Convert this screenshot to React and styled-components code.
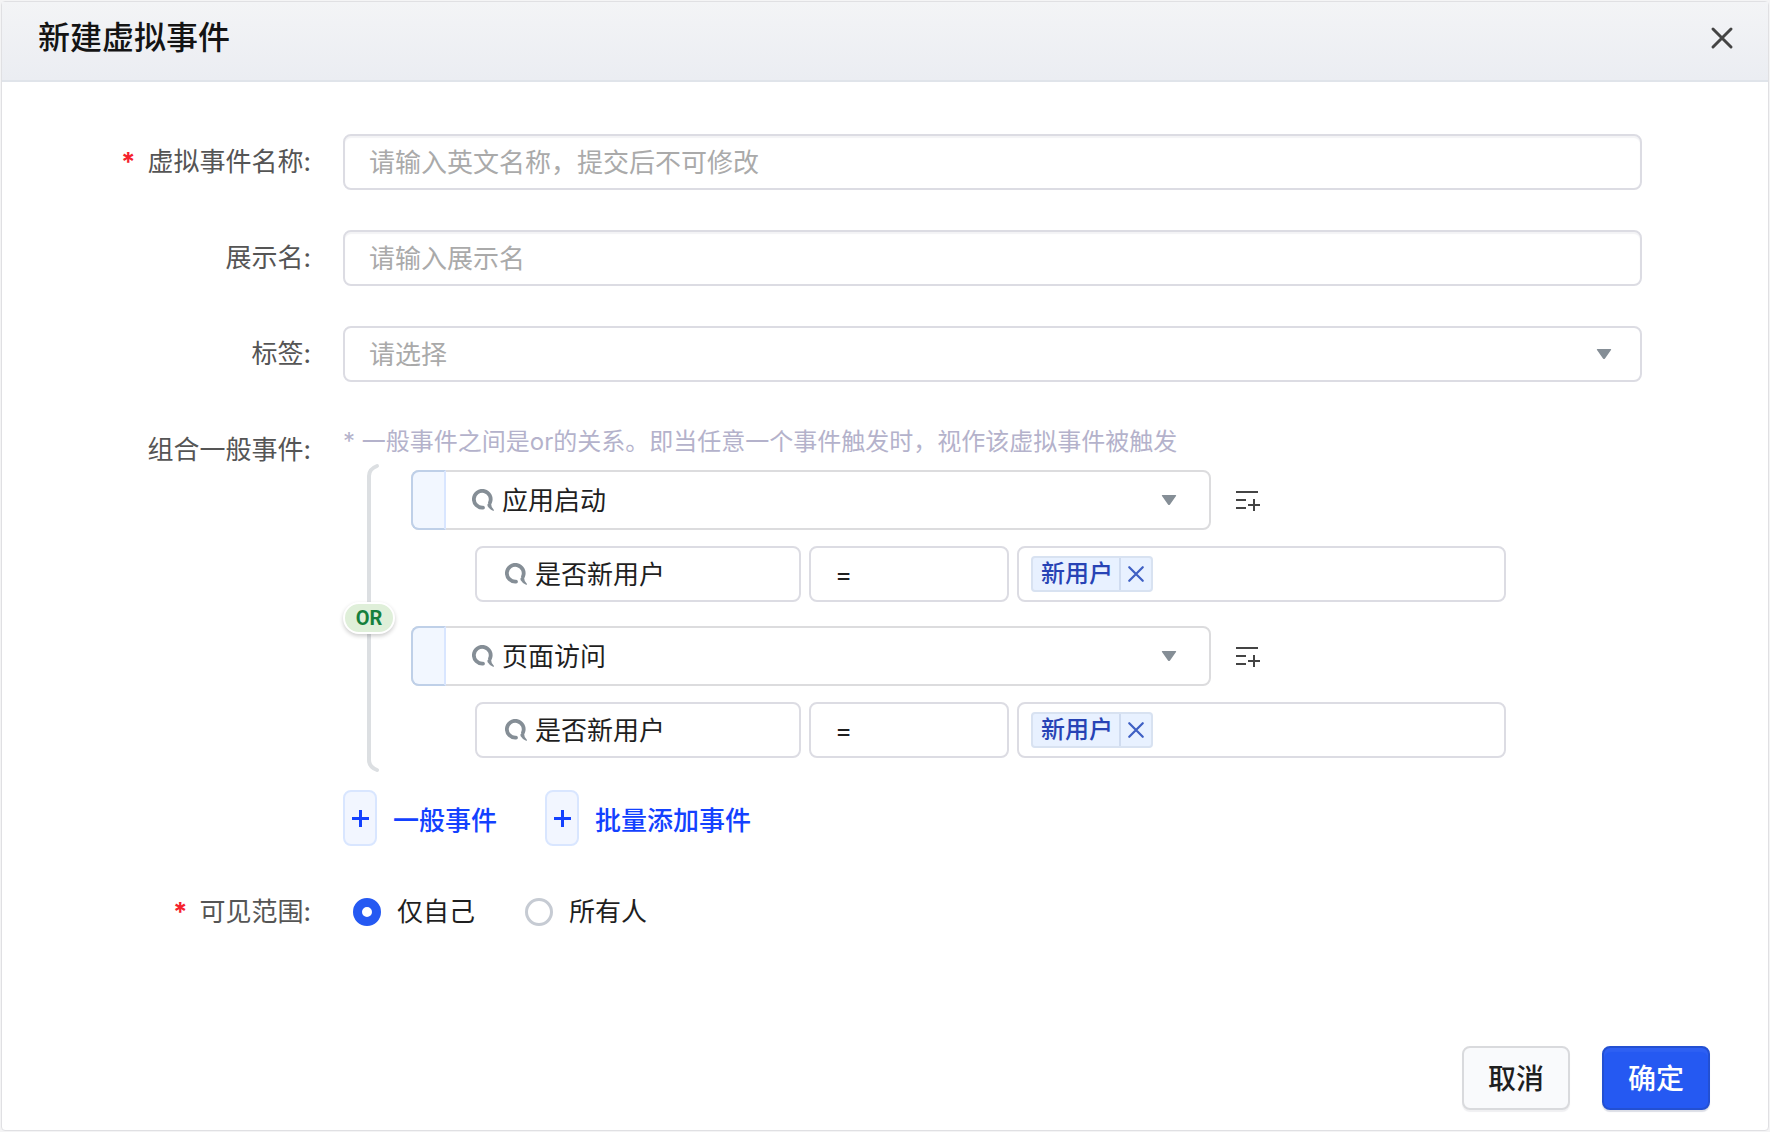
import React, { useState } from 'react'
import styled, { createGlobalStyle, css } from 'styled-components'

const GlobalStyle = createGlobalStyle`
  * {
    box-sizing: border-box;
  }

  body {
    margin: 0;
    background: #f4f4f5;
  }

  body, button, input, select {
    font-family: Inter, "Noto Sans CJK SC", sans-serif;
    font-size: 26px;
    color: #1f1f1f;
  }
`

const Dialog = styled.form`
  display: flex;
  flex-direction: column;
  min-height: calc(100vh - 2px);
  margin: 1px;
  border: 1px solid #e0e0e3;
  border-radius: 4px;
  background: #fff;
`

const Header = styled.header`
  display: flex;
  align-items: center;
  justify-content: space-between;
  height: 80px;
  padding: 0 34px 6px 36px;
  border-bottom: 2px solid #e0e4ea;
  background: linear-gradient(#f3f4f6, #ebedf2);
`

const Title = styled.h1`
  margin: 0;
  font-size: 32px;
  font-weight: 500;
  line-height: 48px;
  color: #141414;
`

const IconButton = styled.button`
  display: flex;
  align-items: center;
  justify-content: center;
  padding: 0;
  border: 0;
  background: none;
  cursor: pointer;
`

const Body = styled.main`
  display: flex;
  flex: 1;
  flex-direction: column;
  gap: 40px;
  padding: 52px 126px 0 0;
`

const Field = styled.div`
  display: grid;
  grid-template-columns: 309px minmax(0, 1fr);
  column-gap: 32px;
  align-items: start;
  line-height: ${props => props.$line || 56}px;
`

const FieldLabel = styled.label`
  text-align: right;
  color: #555;
`

const Required = styled.span`
  margin-right: 12px;
  font-weight: 700;
  color: #f5222d;
`

const controlBorder = css`
  border: 2px solid #dcdce3;
  border-radius: 8px;
  background: #fff;
`

const TextInput = styled.input`
  ${controlBorder}
  width: 100%;
  height: 56px;
  padding: 0 24px;
  box-shadow: inset 0 2px 1px #f3f3f5;
  outline: none;

  &::placeholder {
    color: #aaa;
    opacity: 1;
  }
`

const SelectBox = styled.div`
  ${controlBorder}
  display: grid;
  grid-template-columns: minmax(0, 1fr);
  align-items: center;
  flex: 0 1 ${props => props.$width || 'auto'};
  height: 56px;

  > * {
    grid-area: 1 / 1;
  }

  > svg {
    pointer-events: none;
  }
`

const EventBox = styled(SelectBox)`
  height: 60px;
  border-color: #dcdcde;
`

const Select = styled.select`
  width: 100%;
  height: 100%;
  padding: 0 64px 0 ${props => props.$indent || 24}px;
  border: 0;
  background: none;
  color: ${props => props.$muted ? '#aaa' : '#1f1f1f'};
  appearance: none;
  outline: none;
`

const Handle = styled.span`
  width: 35px;
  height: 60px;
  margin: -2px;
  border: 2px solid #bfd0e8;
  border-right-color: #d9e6ff;
  border-radius: 8px 0 0 8px;
  background: #f2f7ff;
`

const CaretIcon = styled.svg`
  justify-self: end;
  margin-right: ${props => props.$inset || 28}px;
`

const LeadIcon = styled.svg`
  margin-left: ${props => props.$offset}px;
`

const Hint = styled.p`
  margin: 0;
  font-size: 24px;
  line-height: 40px;
  color: #b4b2cb;
`

const Group = styled.div`
  display: flex;
  gap: 16px;
  margin: 2px 0 18px;
`

const Relation = styled.div`
  display: grid;
  flex: none;
  justify-items: center;
  align-items: center;
  width: 52px;

  > * {
    grid-area: 1 / 1;
  }
`

const Bracket = styled.div`
  display: flex;
  flex-direction: column;
  align-self: stretch;
  width: 4px;
`

const BracketEnd = styled.svg`
  flex: none;
  overflow: visible;
`

const BracketLine = styled.div`
  flex: 1;
  background: #dcdfe2;
`

const Badge = styled.span`
  z-index: 1;
  width: 52px;
  border: 2px solid #fff;
  border-radius: 16px;
  background: #dfefd9;
  box-shadow: 0 2px 4px rgba(0, 0, 0, 0.2);
  font-family: Roboto, sans-serif;
  font-size: 20px;
  font-weight: 700;
  line-height: 28px;
  text-align: center;
  color: #15803d;
`

const EventList = styled.div`
  display: flex;
  flex: 1;
  flex-direction: column;
  gap: 24px;
  min-width: 0;
  padding: 6px 0 14px;
`

const EventItem = styled.div`
  display: flex;
  flex-direction: column;
  gap: 16px;
`

const EventRow = styled.div`
  display: flex;
  align-items: center;
  gap: 24px;
`

const FilterRow = styled.div`
  display: flex;
  gap: 8px;
  padding-left: 64px;
`

const TagBox = styled.div`
  ${controlBorder}
  display: flex;
  align-items: center;
  flex: 0 1 489px;
  min-width: 0;
  height: 56px;
  padding: 0 12px;
`

const TagInput = styled.input`
  flex: 1;
  min-width: 0;
  border: 0;
  background: none;
  outline: none;
`

const Tag = styled.span`
  display: flex;
  flex: none;
  height: 36px;
  border: 2px solid #d8e2f1;
  border-radius: 4px;
  background: #e8f1ff;
  font-size: 24px;
  font-weight: 500;
  line-height: 32px;
  color: #2743b5;
`

const TagText = styled.span`
  padding: 0 6px 0 8px;
`

const TagClose = styled(IconButton)`
  width: 32px;
  border-left: 2px solid #d0dcf0;
`

const AddRow = styled.div`
  display: flex;
  gap: 48px;
`

const AddButton = styled.button`
  display: flex;
  align-items: center;
  gap: 16px;
  padding: 0;
  border: 0;
  background: none;
  font-weight: 500;
  color: #1341ff;
  cursor: pointer;
`

const PlusBox = styled.span`
  display: flex;
  align-items: center;
  justify-content: center;
  width: 34px;
  height: 56px;
  border: 2px solid #d9e6ff;
  border-radius: 8px;
  background: #f2f6ff;
`

const RadioRow = styled.div`
  display: flex;
  gap: 50px;
  padding-left: 10px;
`

const RadioLabel = styled.label`
  display: flex;
  align-items: center;
  gap: 16px;
`

const Radio = styled.input`
  width: 28px;
  height: 28px;
  margin: 0;
  border: 3px solid #c6cbd3;
  border-radius: 50%;
  background: #fff;
  appearance: none;

  &:checked {
    border: 9px solid #2559f2;
  }
`

const Footer = styled.footer`
  display: flex;
  justify-content: flex-end;
  gap: 32px;
  padding: 0 58px 20px;
`

const FooterButton = styled.button`
  width: 108px;
  height: 64px;
  padding: 0 0 2px;
  border: 2px solid ${props => props.$primary ? '#2350d2' : '#d9dadd'};
  border-radius: 8px;
  background: ${props => props.$primary ? '#2559f2' : '#f9fafc'};
  box-shadow: 0 2px 1px ${props => props.$primary ? '#dcdee6, inset 0 4px 1px #2e60f3' : '#f0f0f2'};
  font-size: 28px;
  font-weight: 500;
  color: ${props => props.$primary ? '#fff' : '#1f1f1f'};
  cursor: pointer;
`

const Cross = ({ size, color }) =>
  <svg width={size} height={size} viewBox="0 0 24 24" fill="none" stroke={color} strokeWidth="3" strokeLinecap="round">
    <path d="M3 3 21 21M21 3 3 21" />
  </svg>

const Caret = ({ inset }) =>
  <CaretIcon $inset={inset} width="16" height="12" viewBox="0 0 16 12" fill="#858e96">
    <path d="M1.5 1h13q1.2 0 .5 1l-6 8.600q-1 1-2 0L1 2q-.7-1 .5-1Z" />
  </CaretIcon>

const EventIcon = ({ offset }) =>
  <LeadIcon $offset={offset} width="22" height="22" viewBox="0 0 22 22" fill="none">
    <path d="M11 18.600A8.400 8.400 0 1 1 18 13.500" stroke="#858e96" strokeWidth="3.800" strokeLinecap="round" />
    <path d="M15.500 15 18.800 13.500Q19 18 22 21l-.5 1Q17.500 20.500 15.500 17Z" fill="#858e96" />
  </LeadIcon>

const Plus = () =>
  <svg width="18" height="18" viewBox="0 0 18 18" stroke="#1341ff" strokeWidth="3">
    <path d="M9.500 1V18M1 9.500H18" />
  </svg>

const AddFilterIcon = () =>
  <svg width="26" height="22" viewBox="0 0 26 22" stroke="#444" strokeWidth="2">
    <path d="M1 3H23M1 11H11M1 19H11M13 16H25M19 10V22" />
  </svg>

const events = ['应用启动', '页面访问']

const EventEditor = ({ name }) =>
  <EventItem>
    <EventRow>
      <EventBox $width="800px">
        <Handle />
        <EventIcon offset={59} />
        <Select $indent={89} defaultValue={name} aria-label="一般事件">
          {events.map(event => <option key={event}>{event}</option>)}
        </Select>
        <Caret inset={32} />
      </EventBox>
      <IconButton type="button" aria-label="添加筛选">
        <AddFilterIcon />
      </IconButton>
    </EventRow>
    <FilterRow>
      <SelectBox $width="326px">
        <EventIcon offset={28} />
        <Select $indent={58} aria-label="属性">
          <option>是否新用户</option>
        </Select>
      </SelectBox>
      <SelectBox $width="200px">
        <Select aria-label="运算符">
          <option>=</option>
        </Select>
      </SelectBox>
      <TagBox>
        <Tag>
          <TagText>新用户</TagText>
          <TagClose type="button" aria-label="移除">
            <Cross size={18} color="#3f60c4" />
          </TagClose>
        </Tag>
        <TagInput aria-label="属性值" />
      </TagBox>
    </FilterRow>
  </EventItem>

const App = () => {
  const [scope, setScope] = useState('self')

  return (
    <>
      <GlobalStyle />
      <Dialog onSubmit={e => e.preventDefault()}>
        <Header>
          <Title>新建虚拟事件</Title>
          <IconButton type="button" aria-label="关闭">
            <Cross size={24} color="#444" />
          </IconButton>
        </Header>
        <Body>
          <Field>
            <FieldLabel htmlFor="event-name"><Required>*</Required>虚拟事件名称:</FieldLabel>
            <TextInput id="event-name" placeholder="请输入英文名称，提交后不可修改" />
          </Field>
          <Field>
            <FieldLabel htmlFor="display-name">展示名:</FieldLabel>
            <TextInput id="display-name" placeholder="请输入展示名" />
          </Field>
          <Field>
            <FieldLabel htmlFor="tags">标签:</FieldLabel>
            <SelectBox>
              <Select id="tags" $muted>
                <option>请选择</option>
              </Select>
              <Caret />
            </SelectBox>
          </Field>
          <Field>
            <FieldLabel as="span">组合一般事件:</FieldLabel>
            <div>
              <Hint>* 一般事件之间是or的关系。即当任意一个事件触发时，视作该虚拟事件被触发</Hint>
              <Group>
                <Relation>
                  <Bracket>
                    <BracketEnd width="12" height="14" viewBox="0 0 12 14" fill="none">
                      <path d="M2 14V12Q2 5 10 2" stroke="#dcdfe2" strokeWidth="4" strokeLinecap="round" />
                    </BracketEnd>
                    <BracketLine />
                    <BracketEnd width="12" height="14" viewBox="0 0 12 14" fill="none">
                      <path d="M2 0V2Q2 9 10 12" stroke="#dcdfe2" strokeWidth="4" strokeLinecap="round" />
                    </BracketEnd>
                  </Bracket>
                  <Badge>OR</Badge>
                </Relation>
                <EventList>
                  {events.map(event => <EventEditor key={event} name={event} />)}
                </EventList>
              </Group>
              <AddRow>
                <AddButton type="button"><PlusBox><Plus /></PlusBox>一般事件</AddButton>
                <AddButton type="button"><PlusBox><Plus /></PlusBox>批量添加事件</AddButton>
              </AddRow>
            </div>
          </Field>
          <Field $line={52} role="radiogroup" aria-labelledby="scope-label">
            <FieldLabel as="span" id="scope-label"><Required>*</Required>可见范围:</FieldLabel>
            <RadioRow>
              <RadioLabel>
                <Radio type="radio" name="scope" checked={scope === 'self'} onChange={() => setScope('self')} />
                仅自己
              </RadioLabel>
              <RadioLabel>
                <Radio type="radio" name="scope" checked={scope === 'all'} onChange={() => setScope('all')} />
                所有人
              </RadioLabel>
            </RadioRow>
          </Field>
        </Body>
        <Footer>
          <FooterButton type="button">取消</FooterButton>
          <FooterButton type="submit" $primary>确定</FooterButton>
        </Footer>
      </Dialog>
    </>
  )
}

export default App
